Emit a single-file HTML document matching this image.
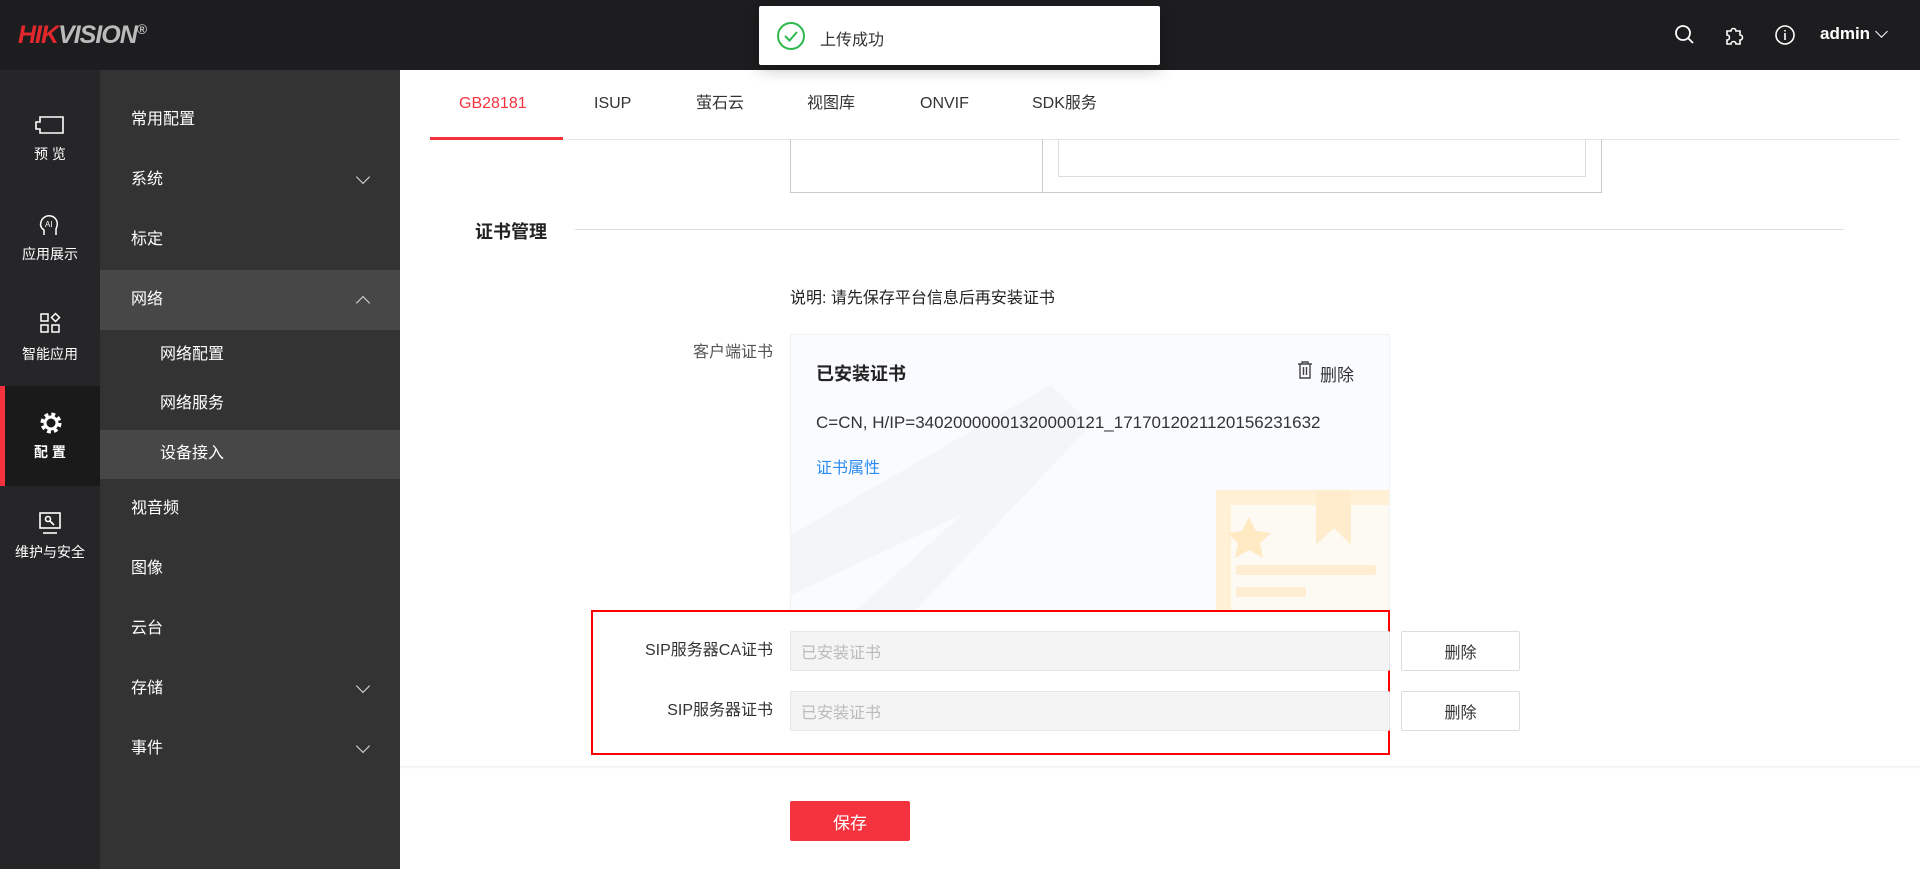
<!DOCTYPE html>
<html><head><meta charset="utf-8"><style>
*{box-sizing:border-box;margin:0;padding:0}
body{width:1920px;height:869px;overflow:hidden;background:#fff;font-family:"Liberation Sans","Noto Sans CJK SC",sans-serif;position:relative;color:#333}
.abs{position:absolute}
.hdr{left:0;top:0;width:1920px;height:70px;background:#1d1d1f}
.side{left:0;top:70px;width:100px;height:799px;background:#262628}
.menu{left:100px;top:70px;width:300px;height:799px;background:#333}
.si{position:absolute;left:0;width:100px;text-align:center;color:#fff;font-size:14px;line-height:20px}
.mi{position:absolute;left:31px;color:#fff;font-size:16px;line-height:20px}
.sub{left:60px}
.chev{position:absolute;left:258px;width:10px;height:10px;border-right:1.5px solid #ddd;border-bottom:1.5px solid #ddd;transform:rotate(45deg)}
.tab{position:absolute;top:92px;height:24px;font-size:16px;line-height:24px;color:#333}
.lbl{position:absolute;right:1147px;font-size:16px;line-height:20px;color:#333;text-align:right;white-space:nowrap}
.inp{position:absolute;left:790px;width:600px;height:40px;background:#f4f4f4;border:1px solid #e6e6e6;border-radius:2px;color:#bbb;font-size:16px;padding-left:10px;display:flex;align-items:center}
.btn{position:absolute;left:1401px;width:119px;height:40px;border:1px solid #ddd;border-radius:2px;background:#fff;font-size:16px;display:flex;align-items:center;justify-content:center;color:#333}
</style></head><body>
<div class="abs hdr"></div>
<div class="abs" style="left:18px;top:21px;font-size:25px;font-weight:bold;font-style:italic;letter-spacing:-1px"><span style="color:#e2272d">HIK</span><span style="color:#bbb">VISION</span><span style="color:#bbb;font-size:14px;vertical-align:top;font-style:normal">®</span></div>
<svg class="abs" style="left:1673px;top:23px" width="24" height="24" viewBox="0 0 24 24" fill="none" stroke="#fff" stroke-width="1.8"><circle cx="10" cy="10" r="7"/><path d="M15 15l5 5"/></svg>
<svg class="abs" style="left:1723px;top:23px" width="24" height="24" viewBox="0 0 24 24" fill="none" stroke="#fff" stroke-width="1.6"><path d="M4 8h4a2.5 2.5 0 1 1 5 0h4v4a2.5 2.5 0 1 1 0 5v4h-4a2.5 2.5 0 1 0-5 0H4v-4a2.5 2.5 0 1 0 0-5z"/></svg>
<svg class="abs" style="left:1774px;top:24px" width="22" height="22" viewBox="0 0 22 22" fill="none" stroke="#fff" stroke-width="1.6"><circle cx="11" cy="11" r="9"/><path d="M11 9v7M11 6v1.5"/></svg>
<div class="abs" style="left:1820px;top:24px;color:#fff;font-size:17px;font-weight:bold">admin</div>
<div class="abs" style="left:1877px;top:27px;width:9px;height:9px;border-right:1.5px solid #fff;border-bottom:1.5px solid #fff;transform:rotate(45deg)"></div>

<div class="abs side">
 <svg class="abs" style="left:34px;top:44px" width="32" height="22" viewBox="0 0 32 22" fill="none" stroke="#fff" stroke-width="1.6"><path d="M6 3h23v16H6v-4H2V8h4z"/></svg>
 <div class="si" style="top:74px">预 览</div>
 <svg class="abs" style="left:38px;top:142px" width="24" height="26" viewBox="0 0 24 26" fill="none" stroke="#fff" stroke-width="1.5"><path d="M6 23v-5c-3-2-4-5-3-8 1-4 5-7 10-6 5 1 7 6 6 10l-1 3v6"/><text x="7" y="15" font-size="8" fill="#fff" stroke="none" font-family="Liberation Sans">AI</text></svg>
 <div class="si" style="top:174px">应用展示</div>
 <svg class="abs" style="left:39px;top:242px" width="22" height="22" viewBox="0 0 22 22" fill="none" stroke="#fff" stroke-width="1.5"><rect x="2" y="2" width="7" height="7"/><rect x="2" y="13" width="7" height="7"/><rect x="13" y="13" width="7" height="7"/><path d="M16.5 1.5l4 4-4 4-4-4z"/></svg>
 <div class="si" style="top:274px">智能应用</div>
 <div class="abs" style="left:0;top:316px;width:100px;height:100px;background:#1a1a1a;border-left:5px solid #f5333f"></div>
 <svg class="abs" style="left:40px;top:342px" width="22" height="22" viewBox="0 0 22 22"><circle cx="11" cy="11" r="8" fill="none" stroke="#fff" stroke-width="5" stroke-dasharray="3.5 2.8"/><circle cx="11" cy="11" r="6" fill="none" stroke="#fff" stroke-width="3"/></svg>
 <div class="si" style="top:372px;font-weight:bold">配 置</div>
 <svg class="abs" style="left:37px;top:440px" width="26" height="26" viewBox="0 0 26 26" fill="none" stroke="#fff" stroke-width="1.6"><rect x="3" y="3" width="20" height="15"/><path d="M6 23h14"/><circle cx="11" cy="9" r="2.5"/><path d="M13 11l4 4"/></svg>
 <div class="si" style="top:472px">维护与安全</div>
</div>

<div class="abs menu">
 <div class="mi" style="top:40px">常用配置</div>
 <div class="mi" style="top:100px">系统</div><div class="chev" style="top:102px"></div>
 <div class="mi" style="top:160px">标定</div>
 <div class="abs" style="left:0;top:200px;width:300px;height:60px;background:#474747"></div>
 <div class="mi" style="top:220px">网络</div><div class="chev" style="top:228px;transform:rotate(225deg)"></div>
 <div class="mi sub" style="top:275px">网络配置</div>
 <div class="mi sub" style="top:324px">网络服务</div>
 <div class="abs" style="left:0;top:360px;width:300px;height:49px;background:#474747"></div>
 <div class="mi sub" style="top:374px">设备接入</div>
 <div class="mi" style="top:429px">视音频</div>
 <div class="mi" style="top:489px">图像</div>
 <div class="mi" style="top:549px">云台</div>
 <div class="mi" style="top:609px">存储</div><div class="chev" style="top:611px"></div>
 <div class="mi" style="top:669px">事件</div><div class="chev" style="top:671px"></div>
</div>

<div class="tab" style="left:459px;color:#f5333f">GB28181</div>
<div class="tab" style="left:594px">ISUP</div>
<div class="tab" style="left:696px">萤石云</div>
<div class="tab" style="left:807px">视图库</div>
<div class="tab" style="left:920px">ONVIF</div>
<div class="tab" style="left:1032px">SDK服务</div>
<div class="abs" style="left:430px;top:139px;width:1470px;height:1px;background:#e5e5e5"></div>
<div class="abs" style="left:430px;top:137px;width:133px;height:3px;background:#f5333f"></div>

<div class="abs" style="left:790px;top:139px;width:812px;height:54px;border:1px solid #ccc;border-top:none"></div>
<div class="abs" style="left:1042px;top:139px;width:1px;height:54px;background:#ccc"></div>
<div class="abs" style="left:1058px;top:139px;width:528px;height:38px;border:1px solid #ddd;border-top:none"></div>

<div class="abs" style="left:475px;top:218px;font-size:18px;font-weight:bold;color:#222">证书管理</div>
<div class="abs" style="left:575px;top:229px;width:1269px;height:1px;background:#ddd"></div>
<div class="abs" style="left:790px;top:284px;font-size:16px;color:#222">说明: 请先保存平台信息后再安装证书</div>
<div class="lbl" style="top:343px;color:#555">客户端证书</div>

<div class="abs" style="left:790px;top:334px;width:600px;height:280px;background:#f9fbfe;overflow:hidden;border:1px solid #f0f2f5">
 <svg class="abs" style="left:0;top:0" width="600" height="280"><path d="M0 200 L260 50 L300 90 L120 280 L60 280 L170 180 L0 260z" fill="#f3f5f9"/><path d="M425 155h180v125h-180z" fill="#fff0d6"/><path d="M440 170h165v110h-165z" fill="#fdfaf4"/><path d="M525 155h35v55l-17-17-18 17z" fill="#ffeccc"/><path d="M458 182l7 14 15 2-11 10 3 15-14-8-14 8 3-15-11-10 15-2z" fill="#ffeac4"/><rect x="445" y="230" width="140" height="10" rx="2" fill="#ffedd2"/><rect x="445" y="252" width="70" height="10" rx="2" fill="#ffedd2"/></svg>
 <div class="abs" style="left:25px;top:25px;font-size:18px;font-weight:bold;color:#222">已安装证书</div>
 <svg class="abs" style="left:506px;top:26px" width="16" height="18" viewBox="0 0 16 18" fill="none" stroke="#444" stroke-width="1.4"><path d="M1 3h14M5 3V1h6v2M3 3v14h10V3M6.5 6v8M9.5 6v8"/></svg>
 <div class="abs" style="left:529px;top:26px;font-size:17px;color:#333">删除</div>
 <div class="abs" style="left:25px;top:78px;font-size:17px;color:#333">C=CN, H/IP=34020000001320000121_171701202112015623163​2</div>
 <div class="abs" style="left:25px;top:119px;font-size:16px;color:#2d8cf0">证书属性</div>
</div>

<div class="abs" style="left:591px;top:610px;width:799px;height:145px;border:2px solid #f00;background:#fff"></div>
<div class="lbl" style="top:641px">SIP服务器CA证书</div>
<div class="inp" style="top:631px">已安装证书</div>
<div class="btn" style="top:631px">删除</div>
<div class="lbl" style="top:701px">SIP服务器证书</div>
<div class="inp" style="top:691px">已安装证书</div>
<div class="btn" style="top:691px">删除</div>

<div class="abs" style="left:400px;top:766px;width:1520px;height:3px;background:linear-gradient(#f0f0f0,#fff)"></div>
<div class="abs" style="left:790px;top:801px;width:120px;height:40px;background:#f5333f;border-radius:2px;color:#fff;font-size:17px;display:flex;align-items:center;justify-content:center">保存</div>

<div class="abs" style="left:759px;top:6px;width:401px;height:59px;background:#fff;border-radius:2px;box-shadow:0 4px 16px rgba(0,0,0,.25)"></div>
<svg class="abs" style="left:776px;top:21px" width="30" height="30" viewBox="0 0 30 30" fill="none" stroke="#2db84d" stroke-width="2"><circle cx="15" cy="15" r="13"/><path d="M9 15l4.5 4.5L21 11"/></svg>
<div class="abs" style="left:820px;top:26px;font-size:16px;color:#333">上传成功</div>
</body></html>
